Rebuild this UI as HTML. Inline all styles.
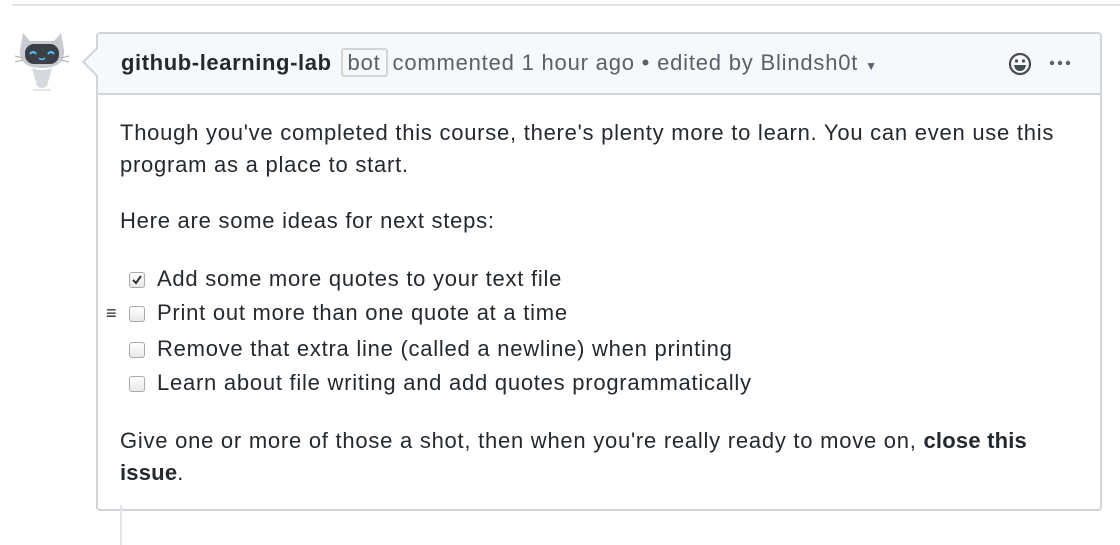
<!DOCTYPE html>
<html><head><style>
*{margin:0;padding:0;box-sizing:border-box}
body{width:1120px;height:540px;background:#fff;font-family:"Liberation Sans",Helvetica,Arial,sans-serif;color:#24292e;position:relative;overflow:hidden;font-size:22px;letter-spacing:0.75px}
.top{position:absolute;left:12px;right:0;top:4px;height:2px;background:#e1e4e8}
.tl{position:absolute;left:120px;top:505px;width:2px;height:40px;background:#e1e4e8}
.box{position:absolute;left:96px;top:32px;width:1006px;height:479px;border:2px solid #d1d5da;border-radius:4px;background:#fff}
.hd{height:61px;background:#f6f8fa;border-bottom:2px solid #d1d5da;border-radius:3px 3px 0 0;position:relative}
.arr{position:absolute;left:-12px;top:18px;width:20px;height:20px;background:#f6f8fa;border-left:2px solid #d1d5da;border-bottom:2px solid #d1d5da;transform:rotate(45deg)}
.ht{position:absolute;left:23px;top:16px;color:#586069;white-space:nowrap;font-size:22px;letter-spacing:0.8px}
.ht b{color:#24292e;letter-spacing:0.6px}
.bot{border:2px solid #d1d5da;border-radius:3px;padding:0 5px;margin:0 5px 0 2px;color:#586069}
.p{position:absolute;left:22px;white-space:nowrap;line-height:32px}
.p b{letter-spacing:0.2px}
.cb{position:absolute;left:31px;width:16px;height:16px;border:1px solid #aaa;border-radius:3px;background:linear-gradient(#fff,#e8e8e8)}
</style></head><body>
<div class="top"></div>
<svg style="position:absolute;left:15px;top:30px" width="54" height="62" viewBox="0 0 54 62">
<path d="M8 3 L15 11 L39 11 L46 3 L49 20 Q50 38 27 38 Q4 38 5 20 Z" fill="#c8ccd1"/>
<rect x="10" y="14" width="34" height="20" rx="9" fill="#3b4047"/>
<path d="M15 24 q3-4 6 0 M33 24 q3-4 6 0" stroke="#4fc3f7" stroke-width="2" fill="none"/>
<path d="M24 28 q3 3 6 0" stroke="#4fc3f7" stroke-width="1.5" fill="none"/>
<path d="M17 38 Q27 42 37 38 L32 56 Q27 60 22 56 Z" fill="#d6d9dd"/>
<path d="M0 26 L8 28 M0 32 L8 30 M46 28 L54 26 M46 30 L54 32" stroke="#aaa" stroke-width="1"/>
<rect x="18" y="59" width="18" height="2" fill="#e1e4e8"/>
</svg>
<div class="box">
<div class="hd"><div class="arr"></div>
<div class="ht"><b>github-learning-lab</b> <span class="bot">bot</span>commented 1 hour ago • edited by Blindsh0t <span style="font-size:12px">▼</span></div>
<svg style="position:absolute;left:910px;top:18px" width="24" height="24" viewBox="0 0 24 24"><circle cx="12" cy="12" r="10" fill="none" stroke="#444d56" stroke-width="2.2"/><circle cx="8.5" cy="9" r="1.6" fill="#444d56"/><circle cx="15.5" cy="9" r="1.6" fill="#444d56"/><path d="M6 13 H18 Q17 19 12 19 Q7 19 6 13Z" fill="#444d56"/></svg>
<svg style="position:absolute;left:950px;top:24px" width="24" height="10"><circle cx="4" cy="5" r="2.2" fill="#586069"/><circle cx="12" cy="5" r="2.2" fill="#586069"/><circle cx="20" cy="5" r="2.2" fill="#586069"/></svg>
</div>
<div class="p" style="top:83px">Though you've completed this course, there's plenty more to learn. You can even use this</div>
<div class="p" style="top:115px">program as a place to start.</div>
<div class="p" style="top:171px">Here are some ideas for next steps:</div>
<div class="cb" style="top:238px"><svg width="14" height="14" style="position:absolute;left:0;top:0"><path d="M3 7 L6 10 L11 3" stroke="#333" stroke-width="2" fill="none"/></svg></div>
<div class="p" style="top:229px;left:59px">Add some more quotes to your text file</div>
<div class="p" style="top:263px;left:8px;font-size:18px">≡</div>
<div class="cb" style="top:272px"></div>
<div class="p" style="top:263px;left:59px">Print out more than one quote at a time</div>
<div class="cb" style="top:308px"></div>
<div class="p" style="top:299px;left:59px">Remove that extra line (called a newline) when printing</div>
<div class="cb" style="top:342px"></div>
<div class="p" style="top:333px;left:59px">Learn about file writing and add quotes programmatically</div>
<div class="p" style="top:391px">Give one or more of those a shot, then when you're really ready to move on, <b>close this</b></div>
<div class="p" style="top:423px"><b>issue</b>.</div>
</div>
<div class="tl"></div>
</body></html>
